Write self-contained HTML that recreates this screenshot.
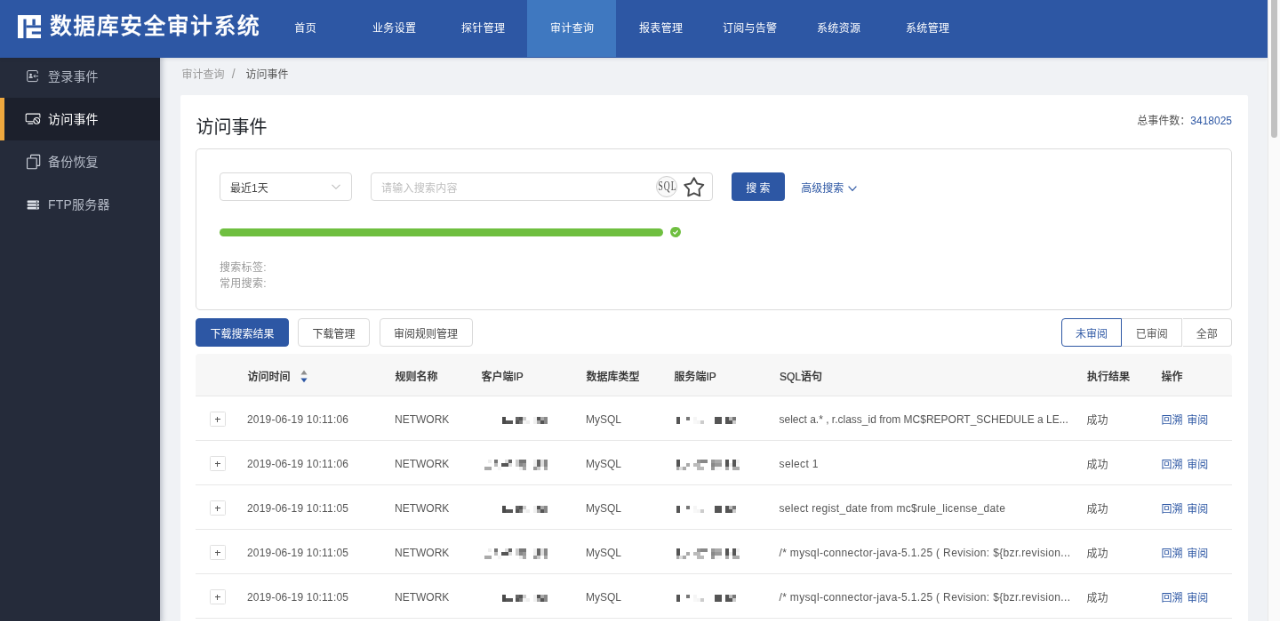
<!DOCTYPE html>
<html lang="zh-CN">
<head>
<meta charset="utf-8">
<title>数据库安全审计系统</title>
<style>
*{box-sizing:border-box;margin:0;padding:0}
html,body{width:1280px;height:621px;overflow:hidden;background:#f0f2f5}
body{font-family:"Liberation Sans","Noto Sans CJK SC",sans-serif;font-size:12px;color:#555}
#app{position:absolute;left:0;top:0;width:1440px;height:699px;transform:scale(0.888889);transform-origin:0 0;overflow:hidden;will-change:transform;background:#f0f2f5}
/* header */
.hd{position:absolute;left:0;top:0;width:1426px;height:65px;background:#2d57a4;z-index:5;box-shadow:0 1px 4px rgba(0,21,41,.12)}
.logo{position:absolute;left:20.1px;top:16.9px;width:26.2px;height:26.2px}
.ttl{position:absolute;left:56px;top:0;height:64px;line-height:59px;font-size:25px;font-weight:500;color:#fff;white-space:nowrap;letter-spacing:1.35px;-webkit-text-stroke:.35px #fff}
.nav{position:absolute;left:293.35px;top:0;height:64px;display:flex}
.nav div{width:100px;height:64px;line-height:65.2px;text-align:center;color:#fff;font-size:12px;letter-spacing:.3px;padding-left:.6px}
.nav div.on{background:#3f78c0}
/* sidebar */
.sb{position:absolute;left:0;top:62.3px;width:180px;height:640px;background:#252b3a;z-index:4;box-shadow:2px 0 6px rgba(30,40,70,.28)}
.sb .it{position:relative;height:48px;line-height:49.4px;letter-spacing:.2px;padding-left:54px;font-size:14px;color:#b4bac6;white-space:nowrap}
.sb .it.on{background:#1c202c;color:#fff}
.sb .it.on:before{content:"";position:absolute;left:0;top:0;width:5px;height:48px;background:#efa83e}
.sb .it svg{position:absolute;left:28px;top:14px;width:20px;height:20px;overflow:visible}
/* scrollbar */
.scr{position:absolute;left:1426px;top:0;width:14px;height:699px;background:#fafafa;border-left:1px solid #e8e8e8;z-index:6}
.scr i{position:absolute;left:3px;top:-4px;width:7px;height:159px;border-radius:4px;background:#c1c1c1}
/* main */
.bc{position:absolute;left:204.4px;top:65.3px;height:38px;line-height:37px;font-size:12px;color:#999;white-space:nowrap}
.bc b{font-weight:400;color:#555}
.bc span{margin:0 11.8px 0 8.4px;color:#999;font-size:14px}
.card{position:absolute;left:202.5px;top:107.3px;width:1201px;height:700px;background:#fff;border-radius:2px}
.h1{position:absolute;left:18px;top:17.3px;font-size:20px;line-height:36px;color:#20242a;white-space:nowrap}
.tot{position:absolute;right:17.5px;top:18.6px;font-size:12px;line-height:20px;color:#555;white-space:nowrap}
.tot em{font-style:normal;color:#2d57a4}
.pan{position:absolute;left:17.5px;top:60px;width:1166px;height:181.3px;border:1px solid #dcdcdc;border-radius:5px;background:#fff}
.sel{position:absolute;left:26px;top:26px;width:149px;height:32px;border:1px solid #d9d9d9;border-radius:4px;line-height:30px;padding-left:11px;padding-top:1.5px;font-size:12px;color:#444}
.sel svg{position:absolute;right:11px;top:9px;width:12px;height:12px}
.inp{position:absolute;left:196px;top:26px;width:385.2px;height:32px;border:1px solid #d9d9d9;border-radius:4px;line-height:30px;padding-left:11px;padding-top:1.5px;font-size:12px;color:#bebebe;letter-spacing:.25px}
.sql{position:absolute;left:319.7px;top:2.5px;width:24.5px;height:24.5px;border:1.2px solid #cdcdcd;border-radius:50%;background:#f9f9f9;color:#4a4a4a;font-family:"Liberation Serif",serif;font-size:14.5px;line-height:21.5px;letter-spacing:1.6px;text-align:center;white-space:nowrap}
.sql b{display:inline-block;font-weight:400;transform:scaleX(.66);transform-origin:50% 50%;margin:0 -8px 0 -6.4px}
.star{position:absolute;left:348.75px;top:1.9px;width:27.5px;height:27.5px}
.btnp{position:absolute;left:601.8px;top:26px;width:60px;height:32px;border-radius:4px;background:#2d57a4;color:#fff;font-size:12px;line-height:32px;padding-top:2px;text-align:center}
.adv{position:absolute;left:680.3px;top:27.8px;height:32px;line-height:32px;font-size:12px;color:#2d57a4;white-space:nowrap}
.adv svg{display:inline-block;vertical-align:-1px;margin-left:5px;width:10px;height:10px}
.bar{position:absolute;left:26px;top:88.9px;width:499px;height:8.5px;border-radius:5px;background:#6fbf40}
.chk{position:absolute;left:532.8px;top:86.9px;width:12px;height:12px}
.lab{position:absolute;left:26px;top:124.5px;letter-spacing:.3px;font-size:12px;line-height:17.7px;color:#999;white-space:nowrap}
.btn{position:absolute;top:251px;height:32px;border:1px solid #d9d9d9;border-radius:4px;background:#fff;color:#444;font-size:12px;line-height:30px;padding-top:1.6px;text-align:center;white-space:nowrap}
.btn.pri{background:#2d57a4;border-color:#2d57a4;color:#fff}
.tg{position:absolute;top:251px;height:32px;border:1px solid #d9d9d9;background:#fff;color:#555;font-size:12px;line-height:30px;padding-top:1.7px;text-align:center;white-space:nowrap}
.tg.on{border-color:#2d57a4;color:#2d57a4;border-radius:4px 0 0 4px;z-index:2}
/* table */
.tb{position:absolute;left:17.5px;top:291.05px;width:1166px}
.th{position:relative;height:48px;background:#f7f7f7;border-bottom:1px solid #e8e8e8;border-radius:4px 4px 0 0;font-weight:500;-webkit-text-stroke:.22px #333;color:#333}
.tr{position:relative;height:50px;border-bottom:1px solid #e8e8e8}
.th span,.tr span{position:absolute;top:0;white-space:nowrap;font-size:12px}
.th span{line-height:47px;top:2.6px;margin-left:.4px}
.tr span{line-height:50px;top:1px}
.c1{left:58px}.c2{left:224px}.c3{left:321px}.c4{left:439px}.c5{left:538px}.c6{left:656.5px}.c7{left:1002.5px}.c8{left:1086px}
.c8 a{color:#2d57a4}
.tr .c7,.tr .c8{top:1.7px}
.tr .c8{word-spacing:1.2px;margin-left:.6px}
.ex{position:absolute;left:16.3px;top:16.5px;width:17.5px;height:17.5px;border:1px solid #e0e0e0;border-radius:1.5px;background:#fff}
.ex:before{content:"";position:absolute;left:4.5px;top:7.6px;width:6px;height:1px;background:#555}
.ex:after{content:"";position:absolute;left:7px;top:5.1px;width:1px;height:6px;background:#555}
.mz{position:absolute;top:19px;height:12px}
.tr .c1{letter-spacing:.19px}
.mz i{position:absolute;display:block}
</style>
</head>
<body>
<div id="app">
<div class="hd">
<svg class="logo" viewBox="0 0 23.3 23.3"><rect width="23.3" height="23.3" fill="#fff"/><rect x="5.7" y="4" width="2.8" height="19.3" fill="#2d57a4"/><rect x="14.6" y="4" width="3" height="6.3" fill="#2d57a4"/><rect x="8.4" y="10.2" width="14.9" height="2.5" fill="#2d57a4"/><rect x="14.1" y="16.4" width="9.2" height="2.7" fill="#2d57a4"/></svg>
<div class="ttl">数据库安全审计系统</div>
<div class="nav"><div>首页</div><div>业务设置</div><div>探针管理</div><div class="on">审计查询</div><div>报表管理</div><div>订阅与告警</div><div>系统资源</div><div>系统管理</div></div>
</div>
<div class="scr"><i></i></div>
<div class="sb">
<div class="it"><svg viewBox="-0.4 -0.95 21.2 21.2" fill="none" stroke="#d5d9e2" stroke-width="1"><path d="M14.7 6.2V4.3a1.5 1.5 0 0 0-1.5-1.5H4a1.5 1.5 0 0 0-1.5 1.5v9.8A1.5 1.5 0 0 0 4 15.6h9.2a1.5 1.5 0 0 0 1.5-1.5v-1.7"/><circle cx="6.6" cy="7.5" r="1.35" fill="#d5d9e2" stroke="none"/><path d="M4.2 11.5c.2-1.7 1.1-2.4 2.4-2.4s2.2.7 2.4 2.4z" fill="#d5d9e2" stroke="none"/><path d="M15.6 9.3H10.2M11.9 7.5l-1.8 1.8 1.8 1.8" stroke-width=".9"/></svg>登录事件</div>
<div class="it on"><svg viewBox="0 0 20 20" fill="none" stroke="#fff" stroke-width="1.05"><path d="M9.8 12.8H2.1a.9.9 0 0 1-.9-.9V5a.9.9 0 0 1 .9-.9H16a.9.9 0 0 1 .9.9v3.6"/><path d="M3.4 15.1h5.8" stroke-width="1.5" stroke="#cfd2d8"/><circle cx="13.3" cy="11.8" r="3.35"/><path d="M11 9.5l4.6 4.6"/></svg>访问事件</div>
<div class="it"><svg viewBox="0 0 20 20" fill="none" stroke="#d5d9e2" stroke-width="1.1"><rect x="2.6" y="6" width="10.6" height="11.8" rx=".7"/><path d="M6.6 5.8V3.1a.7.7 0 0 1 .7-.7h8.7a.7.7 0 0 1 .7.7v10.6a.7.7 0 0 1-.7.7h-2.6"/></svg>备份恢复</div>
<div class="it"><svg viewBox="0 0 20 20" fill="#dfe3ea" stroke="none"><rect x="2.6" y="5.6" width="13.4" height="2.6" rx="1"/><rect x="2.6" y="9.2" width="13.4" height="2.6" rx="1"/><rect x="2.6" y="12.8" width="13.4" height="2.6" rx="1"/><circle cx="13.4" cy="6.9" r=".75" fill="#252b3a"/><circle cx="13.4" cy="10.5" r=".75" fill="#252b3a"/><circle cx="13.4" cy="14.1" r=".75" fill="#252b3a"/></svg>FTP服务器</div>
</div>
<div class="bc">审计查询<span>/</span><b>访问事件</b></div>
<div class="card">
<div class="h1">访问事件</div>
<div class="tot">总事件数：<em>3418025</em></div>
<div class="pan">
<div class="sel">最近1天<svg viewBox="0 0 12 12" fill="none" stroke="#bbb" stroke-width="1.1"><path d="M1.5 3.8L6 8.3l4.5-4.5"/></svg></div>
<div class="inp">请输入搜索内容<div class="sql"><b>SQL</b></div><svg class="star" viewBox="0 0 27.5 27.5" fill="none" stroke="#4a4a4a" stroke-width="1.9" stroke-linejoin="round"><path d="M13.75 3.20 L17.28 9.45 L24.31 10.87 L19.46 16.15 L20.27 23.28 L13.75 20.30 L7.23 23.28 L8.04 16.15 L3.19 10.87 L10.22 9.45z"/></svg></div>
<div class="btnp">搜 索</div>
<div class="adv">高级搜索<svg viewBox="0 0 10 10" fill="none" stroke="#2d57a4" stroke-width="1.2"><path d="M.6 2.6L5 7.4l4.4-4.8"/></svg></div>
<div class="bar"></div>
<svg class="chk" viewBox="0 0 13 13"><circle cx="6.5" cy="6.5" r="6.5" fill="#6fbf40"/><path d="M3.6 6.7l2 2 3.8-4" fill="none" stroke="#fff" stroke-width="1.3"/></svg>
<div class="lab">搜索标签:<br>常用搜索:</div>
</div>
<div class="btn pri" style="left:17.5px;width:105px">下载搜索结果</div>
<div class="btn" style="left:132.8px;width:80.4px">下载管理</div>
<div class="btn" style="left:224px;width:105px">审阅规则管理</div>
<div class="tg on" style="left:991.5px;width:67.8px">未审阅</div>
<div class="tg" style="left:1058.3px;width:69.7px">已审阅</div>
<div class="tg" style="left:1128px;width:55.5px;border-radius:0 4px 4px 0;border-left:0">全部</div>
<div class="tb">
<div class="th"><span class="c1">访问时间<svg style="display:inline-block;vertical-align:-3.8px;margin-left:11px" width="10" height="17" viewBox="0 0 10 17"><path d="M5 1.6L8.6 6.4H1.4z" fill="#8e8e8e"/><path d="M5 15.2L8.6 10.4H1.4z" fill="#2d57a4"/></svg></span><span class="c2">规则名称</span><span class="c3">客户端IP</span><span class="c4">数据库类型</span><span class="c5">服务端IP</span><span class="c6">SQL语句</span><span class="c7">执行结果</span><span class="c8">操作</span></div>
<div class="tr"><b class="ex"></b><span class="c1">2019-06-19 10:11:06</span><span class="c2">NETWORK</span><div class="mz" style="left:0;top:0"><i style="left:344.6px;top:22.2px;width:4.0px;height:4.0px;background:#4a4a4a"></i><i style="left:360.3px;top:22.2px;width:4.0px;height:4.0px;background:#666"></i><i style="left:364.3px;top:22.2px;width:4.0px;height:4.0px;background:#555"></i><i style="left:368.2px;top:22.2px;width:4.0px;height:4.0px;background:#ccc"></i><i style="left:380.0px;top:22.2px;width:4.0px;height:4.0px;background:#f0f0f0"></i><i style="left:384.0px;top:22.2px;width:4.0px;height:4.0px;background:#555"></i><i style="left:387.9px;top:22.2px;width:4.0px;height:4.0px;background:#aaa"></i><i style="left:391.9px;top:22.2px;width:4.0px;height:4.0px;background:#888"></i><i style="left:344.6px;top:26.2px;width:4.0px;height:4.1px;background:#4a4a4a"></i><i style="left:348.5px;top:26.2px;width:4.0px;height:4.1px;background:#555"></i><i style="left:352.5px;top:26.2px;width:4.0px;height:4.1px;background:#555"></i><i style="left:360.3px;top:26.2px;width:4.0px;height:4.1px;background:#555"></i><i style="left:364.3px;top:26.2px;width:4.0px;height:4.1px;background:#777"></i><i style="left:368.2px;top:26.2px;width:4.0px;height:4.1px;background:#f5f5f5"></i><i style="left:372.2px;top:26.2px;width:4.0px;height:4.1px;background:#eee"></i><i style="left:380.0px;top:26.2px;width:4.0px;height:4.1px;background:#f0f0f0"></i><i style="left:384.0px;top:26.2px;width:4.0px;height:4.1px;background:#aaa"></i><i style="left:387.9px;top:26.2px;width:4.0px;height:4.1px;background:#555"></i><i style="left:391.9px;top:26.2px;width:4.0px;height:4.1px;background:#888"></i><i style="left:540.5px;top:22.2px;width:4.0px;height:4.0px;background:#555"></i><i style="left:552.3px;top:22.2px;width:4.0px;height:4.0px;background:#777"></i><i style="left:560.2px;top:22.2px;width:4.0px;height:4.0px;background:#f5f5f5"></i><i style="left:583.8px;top:22.2px;width:4.0px;height:4.0px;background:#555"></i><i style="left:587.8px;top:22.2px;width:4.0px;height:4.0px;background:#555"></i><i style="left:595.6px;top:22.2px;width:4.0px;height:4.0px;background:#555"></i><i style="left:599.6px;top:22.2px;width:4.0px;height:4.0px;background:#bbb"></i><i style="left:603.5px;top:22.2px;width:4.0px;height:4.0px;background:#777"></i><i style="left:540.5px;top:26.2px;width:4.0px;height:4.1px;background:#555"></i><i style="left:560.2px;top:26.2px;width:4.0px;height:4.1px;background:#f8f8f8"></i><i style="left:564.1px;top:26.2px;width:4.0px;height:4.1px;background:#f5f5f5"></i><i style="left:568.1px;top:26.2px;width:4.0px;height:4.1px;background:#ccc"></i><i style="left:583.8px;top:26.2px;width:4.0px;height:4.1px;background:#555"></i><i style="left:587.8px;top:26.2px;width:4.0px;height:4.1px;background:#555"></i><i style="left:595.6px;top:26.2px;width:4.0px;height:4.1px;background:#555"></i><i style="left:599.6px;top:26.2px;width:4.0px;height:4.1px;background:#555"></i><i style="left:603.5px;top:26.2px;width:4.0px;height:4.1px;background:#ccc"></i></div><span class="c4">MySQL</span><span class="c6">select a.* , r.class_id from MC$REPORT_SCHEDULE a LE...</span><span class="c7">成功</span><span class="c8"><a>回溯</a> <a>审阅</a></span></div>
<div class="tr"><b class="ex"></b><span class="c1">2019-06-19 10:11:06</span><span class="c2">NETWORK</span><div class="mz" style="left:0;top:0"><i style="left:328.5px;top:20.3px;width:4.0px;height:4.0px;background:#eee"></i><i style="left:336.3px;top:20.3px;width:4.0px;height:4.0px;background:#777"></i><i style="left:348.2px;top:20.3px;width:4.0px;height:4.0px;background:#ddd"></i><i style="left:352.1px;top:20.3px;width:4.0px;height:4.0px;background:#666"></i><i style="left:360.0px;top:20.3px;width:4.0px;height:4.0px;background:#ccc"></i><i style="left:363.9px;top:20.3px;width:4.0px;height:4.0px;background:#777"></i><i style="left:367.9px;top:20.3px;width:4.0px;height:4.0px;background:#777"></i><i style="left:379.7px;top:20.3px;width:4.0px;height:4.0px;background:#f0f0f0"></i><i style="left:383.6px;top:20.3px;width:4.0px;height:4.0px;background:#666"></i><i style="left:387.6px;top:20.3px;width:4.0px;height:4.0px;background:#ddd"></i><i style="left:391.5px;top:20.3px;width:4.0px;height:4.0px;background:#888"></i><i style="left:336.3px;top:24.2px;width:4.0px;height:4.1px;background:#bbb"></i><i style="left:344.2px;top:24.2px;width:4.0px;height:4.1px;background:#555"></i><i style="left:348.2px;top:24.2px;width:4.0px;height:4.1px;background:#555"></i><i style="left:352.1px;top:24.2px;width:4.0px;height:4.1px;background:#ddd"></i><i style="left:360.0px;top:24.2px;width:4.0px;height:4.1px;background:#ccc"></i><i style="left:363.9px;top:24.2px;width:4.0px;height:4.1px;background:#888"></i><i style="left:367.9px;top:24.2px;width:4.0px;height:4.1px;background:#999"></i><i style="left:379.7px;top:24.2px;width:4.0px;height:4.1px;background:#eee"></i><i style="left:383.6px;top:24.2px;width:4.0px;height:4.1px;background:#666"></i><i style="left:387.6px;top:24.2px;width:4.0px;height:4.1px;background:#ddd"></i><i style="left:391.5px;top:24.2px;width:4.0px;height:4.1px;background:#888"></i><i style="left:324.5px;top:28.3px;width:4.0px;height:4.4px;background:#aaa"></i><i style="left:328.5px;top:28.3px;width:4.0px;height:4.4px;background:#aaa"></i><i style="left:340.3px;top:28.3px;width:4.0px;height:4.4px;background:#f5f5f5"></i><i style="left:363.9px;top:28.3px;width:4.0px;height:4.4px;background:#eee"></i><i style="left:367.9px;top:28.3px;width:4.0px;height:4.4px;background:#aaa"></i><i style="left:379.7px;top:28.3px;width:4.0px;height:4.4px;background:#999"></i><i style="left:383.6px;top:28.3px;width:4.0px;height:4.4px;background:#ccc"></i><i style="left:391.5px;top:28.3px;width:4.0px;height:4.4px;background:#aaa"></i><i style="left:540.5px;top:20.3px;width:4.0px;height:4.0px;background:#555"></i><i style="left:564.1px;top:20.3px;width:4.0px;height:4.0px;background:#999"></i><i style="left:568.1px;top:20.3px;width:4.0px;height:4.0px;background:#888"></i><i style="left:572.0px;top:20.3px;width:4.0px;height:4.0px;background:#888"></i><i style="left:579.9px;top:20.3px;width:4.0px;height:4.0px;background:#999"></i><i style="left:583.8px;top:20.3px;width:4.0px;height:4.0px;background:#aaa"></i><i style="left:587.8px;top:20.3px;width:4.0px;height:4.0px;background:#aaa"></i><i style="left:595.6px;top:20.3px;width:4.0px;height:4.0px;background:#555"></i><i style="left:603.5px;top:20.3px;width:4.0px;height:4.0px;background:#555"></i><i style="left:607.5px;top:20.3px;width:4.0px;height:4.0px;background:#eee"></i><i style="left:540.5px;top:24.2px;width:4.0px;height:4.1px;background:#555"></i><i style="left:552.3px;top:24.2px;width:4.0px;height:4.1px;background:#aaa"></i><i style="left:560.2px;top:24.2px;width:4.0px;height:4.1px;background:#bbb"></i><i style="left:564.1px;top:24.2px;width:4.0px;height:4.1px;background:#bbb"></i><i style="left:579.9px;top:24.2px;width:4.0px;height:4.1px;background:#888"></i><i style="left:583.8px;top:24.2px;width:4.0px;height:4.1px;background:#999"></i><i style="left:587.8px;top:24.2px;width:4.0px;height:4.1px;background:#999"></i><i style="left:595.6px;top:24.2px;width:4.0px;height:4.1px;background:#555"></i><i style="left:599.6px;top:24.2px;width:4.0px;height:4.1px;background:#eee"></i><i style="left:603.5px;top:24.2px;width:4.0px;height:4.1px;background:#555"></i><i style="left:607.5px;top:24.2px;width:4.0px;height:4.1px;background:#f5f5f5"></i><i style="left:540.5px;top:28.3px;width:4.0px;height:4.4px;background:#aaa"></i><i style="left:544.4px;top:28.3px;width:4.0px;height:4.4px;background:#ddd"></i><i style="left:548.4px;top:28.3px;width:4.0px;height:4.4px;background:#aaa"></i><i style="left:564.1px;top:28.3px;width:4.0px;height:4.4px;background:#bbb"></i><i style="left:568.1px;top:28.3px;width:4.0px;height:4.4px;background:#bbb"></i><i style="left:579.9px;top:28.3px;width:4.0px;height:4.4px;background:#999"></i><i style="left:583.8px;top:28.3px;width:4.0px;height:4.4px;background:#f5f5f5"></i><i style="left:587.8px;top:28.3px;width:4.0px;height:4.4px;background:#f8f8f8"></i><i style="left:595.6px;top:28.3px;width:4.0px;height:4.4px;background:#aaa"></i><i style="left:603.5px;top:28.3px;width:4.0px;height:4.4px;background:#aaa"></i><i style="left:607.5px;top:28.3px;width:4.0px;height:4.4px;background:#aaa"></i></div><span class="c4">MySQL</span><span class="c6" style="letter-spacing:.38px">select 1</span><span class="c7">成功</span><span class="c8"><a>回溯</a> <a>审阅</a></span></div>
<div class="tr"><b class="ex"></b><span class="c1">2019-06-19 10:11:05</span><span class="c2">NETWORK</span><div class="mz" style="left:0;top:0"><i style="left:344.6px;top:22.2px;width:4.0px;height:4.0px;background:#4a4a4a"></i><i style="left:360.3px;top:22.2px;width:4.0px;height:4.0px;background:#666"></i><i style="left:364.3px;top:22.2px;width:4.0px;height:4.0px;background:#555"></i><i style="left:368.2px;top:22.2px;width:4.0px;height:4.0px;background:#ccc"></i><i style="left:380.0px;top:22.2px;width:4.0px;height:4.0px;background:#f0f0f0"></i><i style="left:384.0px;top:22.2px;width:4.0px;height:4.0px;background:#555"></i><i style="left:387.9px;top:22.2px;width:4.0px;height:4.0px;background:#aaa"></i><i style="left:391.9px;top:22.2px;width:4.0px;height:4.0px;background:#888"></i><i style="left:344.6px;top:26.2px;width:4.0px;height:4.1px;background:#4a4a4a"></i><i style="left:348.5px;top:26.2px;width:4.0px;height:4.1px;background:#555"></i><i style="left:352.5px;top:26.2px;width:4.0px;height:4.1px;background:#555"></i><i style="left:360.3px;top:26.2px;width:4.0px;height:4.1px;background:#555"></i><i style="left:364.3px;top:26.2px;width:4.0px;height:4.1px;background:#777"></i><i style="left:368.2px;top:26.2px;width:4.0px;height:4.1px;background:#f5f5f5"></i><i style="left:372.2px;top:26.2px;width:4.0px;height:4.1px;background:#eee"></i><i style="left:380.0px;top:26.2px;width:4.0px;height:4.1px;background:#f0f0f0"></i><i style="left:384.0px;top:26.2px;width:4.0px;height:4.1px;background:#aaa"></i><i style="left:387.9px;top:26.2px;width:4.0px;height:4.1px;background:#555"></i><i style="left:391.9px;top:26.2px;width:4.0px;height:4.1px;background:#888"></i><i style="left:540.5px;top:22.2px;width:4.0px;height:4.0px;background:#555"></i><i style="left:552.3px;top:22.2px;width:4.0px;height:4.0px;background:#777"></i><i style="left:560.2px;top:22.2px;width:4.0px;height:4.0px;background:#f5f5f5"></i><i style="left:583.8px;top:22.2px;width:4.0px;height:4.0px;background:#555"></i><i style="left:587.8px;top:22.2px;width:4.0px;height:4.0px;background:#555"></i><i style="left:595.6px;top:22.2px;width:4.0px;height:4.0px;background:#555"></i><i style="left:599.6px;top:22.2px;width:4.0px;height:4.0px;background:#bbb"></i><i style="left:603.5px;top:22.2px;width:4.0px;height:4.0px;background:#777"></i><i style="left:540.5px;top:26.2px;width:4.0px;height:4.1px;background:#555"></i><i style="left:560.2px;top:26.2px;width:4.0px;height:4.1px;background:#f8f8f8"></i><i style="left:564.1px;top:26.2px;width:4.0px;height:4.1px;background:#f5f5f5"></i><i style="left:568.1px;top:26.2px;width:4.0px;height:4.1px;background:#ccc"></i><i style="left:583.8px;top:26.2px;width:4.0px;height:4.1px;background:#555"></i><i style="left:587.8px;top:26.2px;width:4.0px;height:4.1px;background:#555"></i><i style="left:595.6px;top:26.2px;width:4.0px;height:4.1px;background:#555"></i><i style="left:599.6px;top:26.2px;width:4.0px;height:4.1px;background:#555"></i><i style="left:603.5px;top:26.2px;width:4.0px;height:4.1px;background:#ccc"></i></div><span class="c4">MySQL</span><span class="c6" style="letter-spacing:.3px">select regist_date from mc$rule_license_date</span><span class="c7">成功</span><span class="c8"><a>回溯</a> <a>审阅</a></span></div>
<div class="tr"><b class="ex"></b><span class="c1">2019-06-19 10:11:05</span><span class="c2">NETWORK</span><div class="mz" style="left:0;top:0"><i style="left:328.5px;top:20.3px;width:4.0px;height:4.0px;background:#eee"></i><i style="left:336.3px;top:20.3px;width:4.0px;height:4.0px;background:#777"></i><i style="left:348.2px;top:20.3px;width:4.0px;height:4.0px;background:#ddd"></i><i style="left:352.1px;top:20.3px;width:4.0px;height:4.0px;background:#666"></i><i style="left:360.0px;top:20.3px;width:4.0px;height:4.0px;background:#ccc"></i><i style="left:363.9px;top:20.3px;width:4.0px;height:4.0px;background:#777"></i><i style="left:367.9px;top:20.3px;width:4.0px;height:4.0px;background:#777"></i><i style="left:379.7px;top:20.3px;width:4.0px;height:4.0px;background:#f0f0f0"></i><i style="left:383.6px;top:20.3px;width:4.0px;height:4.0px;background:#666"></i><i style="left:387.6px;top:20.3px;width:4.0px;height:4.0px;background:#ddd"></i><i style="left:391.5px;top:20.3px;width:4.0px;height:4.0px;background:#888"></i><i style="left:336.3px;top:24.2px;width:4.0px;height:4.1px;background:#bbb"></i><i style="left:344.2px;top:24.2px;width:4.0px;height:4.1px;background:#555"></i><i style="left:348.2px;top:24.2px;width:4.0px;height:4.1px;background:#555"></i><i style="left:352.1px;top:24.2px;width:4.0px;height:4.1px;background:#ddd"></i><i style="left:360.0px;top:24.2px;width:4.0px;height:4.1px;background:#ccc"></i><i style="left:363.9px;top:24.2px;width:4.0px;height:4.1px;background:#888"></i><i style="left:367.9px;top:24.2px;width:4.0px;height:4.1px;background:#999"></i><i style="left:379.7px;top:24.2px;width:4.0px;height:4.1px;background:#eee"></i><i style="left:383.6px;top:24.2px;width:4.0px;height:4.1px;background:#666"></i><i style="left:387.6px;top:24.2px;width:4.0px;height:4.1px;background:#ddd"></i><i style="left:391.5px;top:24.2px;width:4.0px;height:4.1px;background:#888"></i><i style="left:324.5px;top:28.3px;width:4.0px;height:4.4px;background:#aaa"></i><i style="left:328.5px;top:28.3px;width:4.0px;height:4.4px;background:#aaa"></i><i style="left:340.3px;top:28.3px;width:4.0px;height:4.4px;background:#f5f5f5"></i><i style="left:363.9px;top:28.3px;width:4.0px;height:4.4px;background:#eee"></i><i style="left:367.9px;top:28.3px;width:4.0px;height:4.4px;background:#aaa"></i><i style="left:379.7px;top:28.3px;width:4.0px;height:4.4px;background:#999"></i><i style="left:383.6px;top:28.3px;width:4.0px;height:4.4px;background:#ccc"></i><i style="left:391.5px;top:28.3px;width:4.0px;height:4.4px;background:#aaa"></i><i style="left:540.5px;top:20.3px;width:4.0px;height:4.0px;background:#555"></i><i style="left:564.1px;top:20.3px;width:4.0px;height:4.0px;background:#999"></i><i style="left:568.1px;top:20.3px;width:4.0px;height:4.0px;background:#888"></i><i style="left:572.0px;top:20.3px;width:4.0px;height:4.0px;background:#888"></i><i style="left:579.9px;top:20.3px;width:4.0px;height:4.0px;background:#999"></i><i style="left:583.8px;top:20.3px;width:4.0px;height:4.0px;background:#aaa"></i><i style="left:587.8px;top:20.3px;width:4.0px;height:4.0px;background:#aaa"></i><i style="left:595.6px;top:20.3px;width:4.0px;height:4.0px;background:#555"></i><i style="left:603.5px;top:20.3px;width:4.0px;height:4.0px;background:#555"></i><i style="left:607.5px;top:20.3px;width:4.0px;height:4.0px;background:#eee"></i><i style="left:540.5px;top:24.2px;width:4.0px;height:4.1px;background:#555"></i><i style="left:552.3px;top:24.2px;width:4.0px;height:4.1px;background:#aaa"></i><i style="left:560.2px;top:24.2px;width:4.0px;height:4.1px;background:#bbb"></i><i style="left:564.1px;top:24.2px;width:4.0px;height:4.1px;background:#bbb"></i><i style="left:579.9px;top:24.2px;width:4.0px;height:4.1px;background:#888"></i><i style="left:583.8px;top:24.2px;width:4.0px;height:4.1px;background:#999"></i><i style="left:587.8px;top:24.2px;width:4.0px;height:4.1px;background:#999"></i><i style="left:595.6px;top:24.2px;width:4.0px;height:4.1px;background:#555"></i><i style="left:599.6px;top:24.2px;width:4.0px;height:4.1px;background:#eee"></i><i style="left:603.5px;top:24.2px;width:4.0px;height:4.1px;background:#555"></i><i style="left:607.5px;top:24.2px;width:4.0px;height:4.1px;background:#f5f5f5"></i><i style="left:540.5px;top:28.3px;width:4.0px;height:4.4px;background:#aaa"></i><i style="left:544.4px;top:28.3px;width:4.0px;height:4.4px;background:#ddd"></i><i style="left:548.4px;top:28.3px;width:4.0px;height:4.4px;background:#aaa"></i><i style="left:564.1px;top:28.3px;width:4.0px;height:4.4px;background:#bbb"></i><i style="left:568.1px;top:28.3px;width:4.0px;height:4.4px;background:#bbb"></i><i style="left:579.9px;top:28.3px;width:4.0px;height:4.4px;background:#999"></i><i style="left:583.8px;top:28.3px;width:4.0px;height:4.4px;background:#f5f5f5"></i><i style="left:587.8px;top:28.3px;width:4.0px;height:4.4px;background:#f8f8f8"></i><i style="left:595.6px;top:28.3px;width:4.0px;height:4.4px;background:#aaa"></i><i style="left:603.5px;top:28.3px;width:4.0px;height:4.4px;background:#aaa"></i><i style="left:607.5px;top:28.3px;width:4.0px;height:4.4px;background:#aaa"></i></div><span class="c4">MySQL</span><span class="c6" style="letter-spacing:.34px">/* mysql-connector-java-5.1.25 ( Revision: ${bzr.revision...</span><span class="c7">成功</span><span class="c8"><a>回溯</a> <a>审阅</a></span></div>
<div class="tr"><b class="ex"></b><span class="c1">2019-06-19 10:11:05</span><span class="c2">NETWORK</span><div class="mz" style="left:0;top:0"><i style="left:344.6px;top:22.2px;width:4.0px;height:4.0px;background:#4a4a4a"></i><i style="left:360.3px;top:22.2px;width:4.0px;height:4.0px;background:#666"></i><i style="left:364.3px;top:22.2px;width:4.0px;height:4.0px;background:#555"></i><i style="left:368.2px;top:22.2px;width:4.0px;height:4.0px;background:#ccc"></i><i style="left:380.0px;top:22.2px;width:4.0px;height:4.0px;background:#f0f0f0"></i><i style="left:384.0px;top:22.2px;width:4.0px;height:4.0px;background:#555"></i><i style="left:387.9px;top:22.2px;width:4.0px;height:4.0px;background:#aaa"></i><i style="left:391.9px;top:22.2px;width:4.0px;height:4.0px;background:#888"></i><i style="left:344.6px;top:26.2px;width:4.0px;height:4.1px;background:#4a4a4a"></i><i style="left:348.5px;top:26.2px;width:4.0px;height:4.1px;background:#555"></i><i style="left:352.5px;top:26.2px;width:4.0px;height:4.1px;background:#555"></i><i style="left:360.3px;top:26.2px;width:4.0px;height:4.1px;background:#555"></i><i style="left:364.3px;top:26.2px;width:4.0px;height:4.1px;background:#777"></i><i style="left:368.2px;top:26.2px;width:4.0px;height:4.1px;background:#f5f5f5"></i><i style="left:372.2px;top:26.2px;width:4.0px;height:4.1px;background:#eee"></i><i style="left:380.0px;top:26.2px;width:4.0px;height:4.1px;background:#f0f0f0"></i><i style="left:384.0px;top:26.2px;width:4.0px;height:4.1px;background:#aaa"></i><i style="left:387.9px;top:26.2px;width:4.0px;height:4.1px;background:#555"></i><i style="left:391.9px;top:26.2px;width:4.0px;height:4.1px;background:#888"></i><i style="left:540.5px;top:22.2px;width:4.0px;height:4.0px;background:#555"></i><i style="left:552.3px;top:22.2px;width:4.0px;height:4.0px;background:#777"></i><i style="left:560.2px;top:22.2px;width:4.0px;height:4.0px;background:#f5f5f5"></i><i style="left:583.8px;top:22.2px;width:4.0px;height:4.0px;background:#555"></i><i style="left:587.8px;top:22.2px;width:4.0px;height:4.0px;background:#555"></i><i style="left:595.6px;top:22.2px;width:4.0px;height:4.0px;background:#555"></i><i style="left:599.6px;top:22.2px;width:4.0px;height:4.0px;background:#bbb"></i><i style="left:603.5px;top:22.2px;width:4.0px;height:4.0px;background:#777"></i><i style="left:540.5px;top:26.2px;width:4.0px;height:4.1px;background:#555"></i><i style="left:560.2px;top:26.2px;width:4.0px;height:4.1px;background:#f8f8f8"></i><i style="left:564.1px;top:26.2px;width:4.0px;height:4.1px;background:#f5f5f5"></i><i style="left:568.1px;top:26.2px;width:4.0px;height:4.1px;background:#ccc"></i><i style="left:583.8px;top:26.2px;width:4.0px;height:4.1px;background:#555"></i><i style="left:587.8px;top:26.2px;width:4.0px;height:4.1px;background:#555"></i><i style="left:595.6px;top:26.2px;width:4.0px;height:4.1px;background:#555"></i><i style="left:599.6px;top:26.2px;width:4.0px;height:4.1px;background:#555"></i><i style="left:603.5px;top:26.2px;width:4.0px;height:4.1px;background:#ccc"></i></div><span class="c4">MySQL</span><span class="c6" style="letter-spacing:.34px">/* mysql-connector-java-5.1.25 ( Revision: ${bzr.revision...</span><span class="c7">成功</span><span class="c8"><a>回溯</a> <a>审阅</a></span></div>
<div class="tr"><b class="ex"></b><span class="c1">2019-06-19 10:11:05</span><span class="c2">NETWORK</span><div class="mz" style="left:0;top:0"><i style="left:328.5px;top:20.3px;width:4.0px;height:4.0px;background:#eee"></i><i style="left:336.3px;top:20.3px;width:4.0px;height:4.0px;background:#777"></i><i style="left:348.2px;top:20.3px;width:4.0px;height:4.0px;background:#ddd"></i><i style="left:352.1px;top:20.3px;width:4.0px;height:4.0px;background:#666"></i><i style="left:360.0px;top:20.3px;width:4.0px;height:4.0px;background:#ccc"></i><i style="left:363.9px;top:20.3px;width:4.0px;height:4.0px;background:#777"></i><i style="left:367.9px;top:20.3px;width:4.0px;height:4.0px;background:#777"></i><i style="left:379.7px;top:20.3px;width:4.0px;height:4.0px;background:#f0f0f0"></i><i style="left:383.6px;top:20.3px;width:4.0px;height:4.0px;background:#666"></i><i style="left:387.6px;top:20.3px;width:4.0px;height:4.0px;background:#ddd"></i><i style="left:391.5px;top:20.3px;width:4.0px;height:4.0px;background:#888"></i><i style="left:336.3px;top:24.2px;width:4.0px;height:4.1px;background:#bbb"></i><i style="left:344.2px;top:24.2px;width:4.0px;height:4.1px;background:#555"></i><i style="left:348.2px;top:24.2px;width:4.0px;height:4.1px;background:#555"></i><i style="left:352.1px;top:24.2px;width:4.0px;height:4.1px;background:#ddd"></i><i style="left:360.0px;top:24.2px;width:4.0px;height:4.1px;background:#ccc"></i><i style="left:363.9px;top:24.2px;width:4.0px;height:4.1px;background:#888"></i><i style="left:367.9px;top:24.2px;width:4.0px;height:4.1px;background:#999"></i><i style="left:379.7px;top:24.2px;width:4.0px;height:4.1px;background:#eee"></i><i style="left:383.6px;top:24.2px;width:4.0px;height:4.1px;background:#666"></i><i style="left:387.6px;top:24.2px;width:4.0px;height:4.1px;background:#ddd"></i><i style="left:391.5px;top:24.2px;width:4.0px;height:4.1px;background:#888"></i><i style="left:324.5px;top:28.3px;width:4.0px;height:4.4px;background:#aaa"></i><i style="left:328.5px;top:28.3px;width:4.0px;height:4.4px;background:#aaa"></i><i style="left:340.3px;top:28.3px;width:4.0px;height:4.4px;background:#f5f5f5"></i><i style="left:363.9px;top:28.3px;width:4.0px;height:4.4px;background:#eee"></i><i style="left:367.9px;top:28.3px;width:4.0px;height:4.4px;background:#aaa"></i><i style="left:379.7px;top:28.3px;width:4.0px;height:4.4px;background:#999"></i><i style="left:383.6px;top:28.3px;width:4.0px;height:4.4px;background:#ccc"></i><i style="left:391.5px;top:28.3px;width:4.0px;height:4.4px;background:#aaa"></i><i style="left:540.5px;top:20.3px;width:4.0px;height:4.0px;background:#555"></i><i style="left:564.1px;top:20.3px;width:4.0px;height:4.0px;background:#999"></i><i style="left:568.1px;top:20.3px;width:4.0px;height:4.0px;background:#888"></i><i style="left:572.0px;top:20.3px;width:4.0px;height:4.0px;background:#888"></i><i style="left:579.9px;top:20.3px;width:4.0px;height:4.0px;background:#999"></i><i style="left:583.8px;top:20.3px;width:4.0px;height:4.0px;background:#aaa"></i><i style="left:587.8px;top:20.3px;width:4.0px;height:4.0px;background:#aaa"></i><i style="left:595.6px;top:20.3px;width:4.0px;height:4.0px;background:#555"></i><i style="left:603.5px;top:20.3px;width:4.0px;height:4.0px;background:#555"></i><i style="left:607.5px;top:20.3px;width:4.0px;height:4.0px;background:#eee"></i><i style="left:540.5px;top:24.2px;width:4.0px;height:4.1px;background:#555"></i><i style="left:552.3px;top:24.2px;width:4.0px;height:4.1px;background:#aaa"></i><i style="left:560.2px;top:24.2px;width:4.0px;height:4.1px;background:#bbb"></i><i style="left:564.1px;top:24.2px;width:4.0px;height:4.1px;background:#bbb"></i><i style="left:579.9px;top:24.2px;width:4.0px;height:4.1px;background:#888"></i><i style="left:583.8px;top:24.2px;width:4.0px;height:4.1px;background:#999"></i><i style="left:587.8px;top:24.2px;width:4.0px;height:4.1px;background:#999"></i><i style="left:595.6px;top:24.2px;width:4.0px;height:4.1px;background:#555"></i><i style="left:599.6px;top:24.2px;width:4.0px;height:4.1px;background:#eee"></i><i style="left:603.5px;top:24.2px;width:4.0px;height:4.1px;background:#555"></i><i style="left:607.5px;top:24.2px;width:4.0px;height:4.1px;background:#f5f5f5"></i><i style="left:540.5px;top:28.3px;width:4.0px;height:4.4px;background:#aaa"></i><i style="left:544.4px;top:28.3px;width:4.0px;height:4.4px;background:#ddd"></i><i style="left:548.4px;top:28.3px;width:4.0px;height:4.4px;background:#aaa"></i><i style="left:564.1px;top:28.3px;width:4.0px;height:4.4px;background:#bbb"></i><i style="left:568.1px;top:28.3px;width:4.0px;height:4.4px;background:#bbb"></i><i style="left:579.9px;top:28.3px;width:4.0px;height:4.4px;background:#999"></i><i style="left:583.8px;top:28.3px;width:4.0px;height:4.4px;background:#f5f5f5"></i><i style="left:587.8px;top:28.3px;width:4.0px;height:4.4px;background:#f8f8f8"></i><i style="left:595.6px;top:28.3px;width:4.0px;height:4.4px;background:#aaa"></i><i style="left:603.5px;top:28.3px;width:4.0px;height:4.4px;background:#aaa"></i><i style="left:607.5px;top:28.3px;width:4.0px;height:4.4px;background:#aaa"></i></div><span class="c4">MySQL</span><span class="c6" style="letter-spacing:.38px">select 1</span><span class="c7">成功</span><span class="c8"><a>回溯</a> <a>审阅</a></span></div>
</div>
</div>
</div>
</body>
</html>
